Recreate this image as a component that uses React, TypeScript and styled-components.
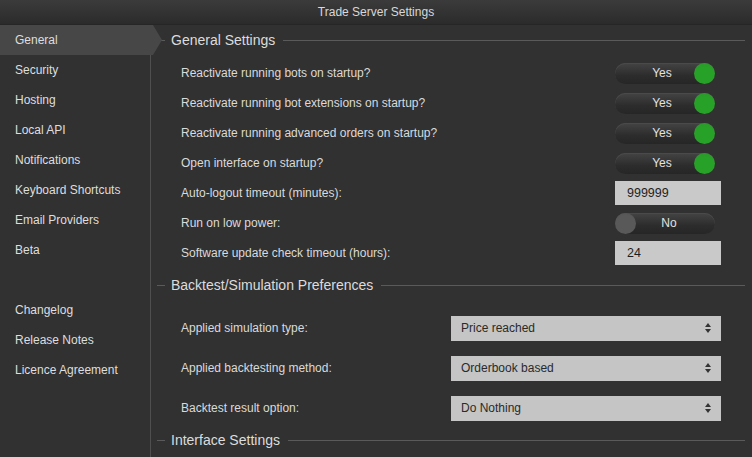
import React from "react";
import styled, { createGlobalStyle } from "styled-components";

const Global = createGlobalStyle`
  html, body { margin: 0; padding: 0; background: #313131; }
  body { font-family: "Liberation Sans", Arial, sans-serif; }
`;

const Window = styled.div`
  width: 752px;
  height: 457px;
  display: flex;
  flex-direction: column;
  background: #313131;
  color: #dcdcdc;
  overflow: hidden;
`;

const TitleBar = styled.div`
  height: 25px;
  flex: none;
  display: flex;
  align-items: center;
  justify-content: center;
  font-size: 12px;
  color: #d8d8d8;
  background: linear-gradient(#3b3b3b, #2b2b2b);
  border-bottom: 1px solid #262626;
  box-sizing: border-box;
`;

const Body = styled.div`
  flex: 1;
  display: flex;
  min-height: 0;
`;

const Sidebar = styled.nav`
  width: 151px;
  flex: none;
  display: flex;
  flex-direction: column;
  border-right: 1px solid #4f4f4f;
  box-sizing: border-box;
  position: relative;
  z-index: 1;
`;

const NavItem = styled.div<{ $active?: boolean }>`
  height: 30px;
  line-height: 30px;
  padding-left: 15px;
  font-size: 12px;
  color: #dedede;
  position: relative;
  margin-right: ${(p) => (p.$active ? "-3px" : "0")};
  background: ${(p) => (p.$active ? "#474747" : "transparent")};
  &::after {
    content: "";
    display: ${(p) => (p.$active ? "block" : "none")};
    position: absolute;
    right: -9px;
    top: 0;
    border-top: 15px solid transparent;
    border-bottom: 15px solid transparent;
    border-left: 9px solid #474747;
  }
`;

const NavGap = styled.div`
  height: 30px;
`;

const Content = styled.main`
  flex: 1;
  display: flex;
  flex-direction: column;
  padding: 0 7px 0 6px;
`;

const SectionHeader = styled.div<{ $mt?: number; $mb?: number }>`
  height: 30px;
  flex: none;
  display: flex;
  align-items: center;
  gap: 6px;
  font-size: 14px;
  color: #dcdcdc;
  margin-top: ${(p) => p.$mt ?? 0}px;
  margin-bottom: ${(p) => p.$mb ?? 0}px;
  &::before {
    content: "";
    width: 8px;
    height: 1px;
    background: #5a5a5a;
  }
  &::after {
    content: "";
    flex: 1;
    height: 1px;
    background: #5a5a5a;
    margin-left: 2px;
  }
`;

const Row = styled.div<{ $h?: number }>`
  height: ${(p) => p.$h ?? 30}px;
  flex: none;
  display: flex;
  align-items: center;
  padding: 0 24px 0 24px;
  font-size: 12px;
  color: #dadada;
`;

const Label = styled.span`
  flex: 1;
`;

const Toggle = styled.div<{ $on: boolean }>`
  width: 100px;
  height: 21px;
  margin-right: 6px;
  border-radius: 11px;
  background: linear-gradient(#444444, #2c2c2c 60%, #262626);
  box-shadow: inset 0 1px 0 #4a4a4a;
  position: relative;
  display: flex;
  align-items: center;
  justify-content: center;
  font-size: 12px;
  color: #e2e2e2;
  padding: ${(p) => (p.$on ? "0 6px 0 0" : "0 0 0 8px")};
  box-sizing: border-box;
`;

const Knob = styled.span<{ $on: boolean }>`
  position: absolute;
  top: 0;
  ${(p) => (p.$on ? "right: 0;" : "left: 0;")}
  width: 21px;
  height: 21px;
  border-radius: 50%;
  background: ${(p) =>
    p.$on
      ? "radial-gradient(circle at 50% 70%, #27a127 60%, #2f8f2f)"
      : "radial-gradient(circle at 50% 60%, #595959 60%, #505050)"};
`;

const TextField = styled.div`
  width: 106px;
  height: 24px;
  background: #c9c9c9;
  color: #1e1e1e;
  font-size: 12.5px;
  display: flex;
  align-items: center;
  padding-left: 12px;
  box-sizing: border-box;
`;

const Select = styled.div`
  width: 270px;
  height: 25px;
  background: #c5c5c5;
  color: #2a2a2a;
  font-size: 12px;
  display: flex;
  align-items: center;
  justify-content: space-between;
  padding: 0 9px 0 10px;
  box-sizing: border-box;
`;

const Spacer = styled.div<{ $h: number }>`
  height: ${(p) => p.$h}px;
  flex: none;
`;

const Spinner = () => (
  <svg width="8" height="12" viewBox="0 0 8 12">
    <path d="M4 1 L7 5 L1 5 Z" fill="#333" />
    <path d="M4 11 L7 7 L1 7 Z" fill="#333" />
  </svg>
);

const navTop = ["General", "Security", "Hosting", "Local API", "Notifications", "Keyboard Shortcuts", "Email Providers", "Beta"];
const navBottom = ["Changelog", "Release Notes", "Licence Agreement"];

const toggles = [
  "Reactivate running bots on startup?",
  "Reactivate running bot extensions on startup?",
  "Reactivate running advanced orders on startup?",
  "Open interface on startup?",
];

const selects = [
  ["Applied simulation type:", "Price reached"],
  ["Applied backtesting method:", "Orderbook based"],
  ["Backtest result option:", "Do Nothing"],
];

export default function App() {
  return (
    <Window>
      <Global />
      <TitleBar>Trade Server Settings</TitleBar>
      <Body>
        <Sidebar>
          {navTop.map((n, i) => (
            <NavItem key={n} $active={i === 0}>{n}</NavItem>
          ))}
          <NavGap />
          {navBottom.map((n) => (
            <NavItem key={n}>{n}</NavItem>
          ))}
        </Sidebar>
        <Content>
          <SectionHeader>General Settings</SectionHeader>
          <Spacer $h={3} />
          {toggles.map((t) => (
            <Row key={t}>
              <Label>{t}</Label>
              <Toggle $on>
                Yes
                <Knob $on />
              </Toggle>
            </Row>
          ))}
          <Row>
            <Label>Auto-logout timeout (minutes):</Label>
            <TextField>999999</TextField>
          </Row>
          <Row>
            <Label>Run on low power:</Label>
            <Toggle $on={false}>
              No
              <Knob $on={false} />
            </Toggle>
          </Row>
          <Row>
            <Label>Software update check timeout (hours):</Label>
            <TextField>24</TextField>
          </Row>
          <SectionHeader $mt={2} $mb={8}>Backtest/Simulation Preferences</SectionHeader>
          {selects.map(([l, v]) => (
            <Row key={l} $h={40}>
              <Label>{l}</Label>
              <Select>
                {v}
                <Spinner />
              </Select>
            </Row>
          ))}
          <SectionHeader $mt={-3}>Interface Settings</SectionHeader>
        </Content>
      </Body>
    </Window>
  );
}
